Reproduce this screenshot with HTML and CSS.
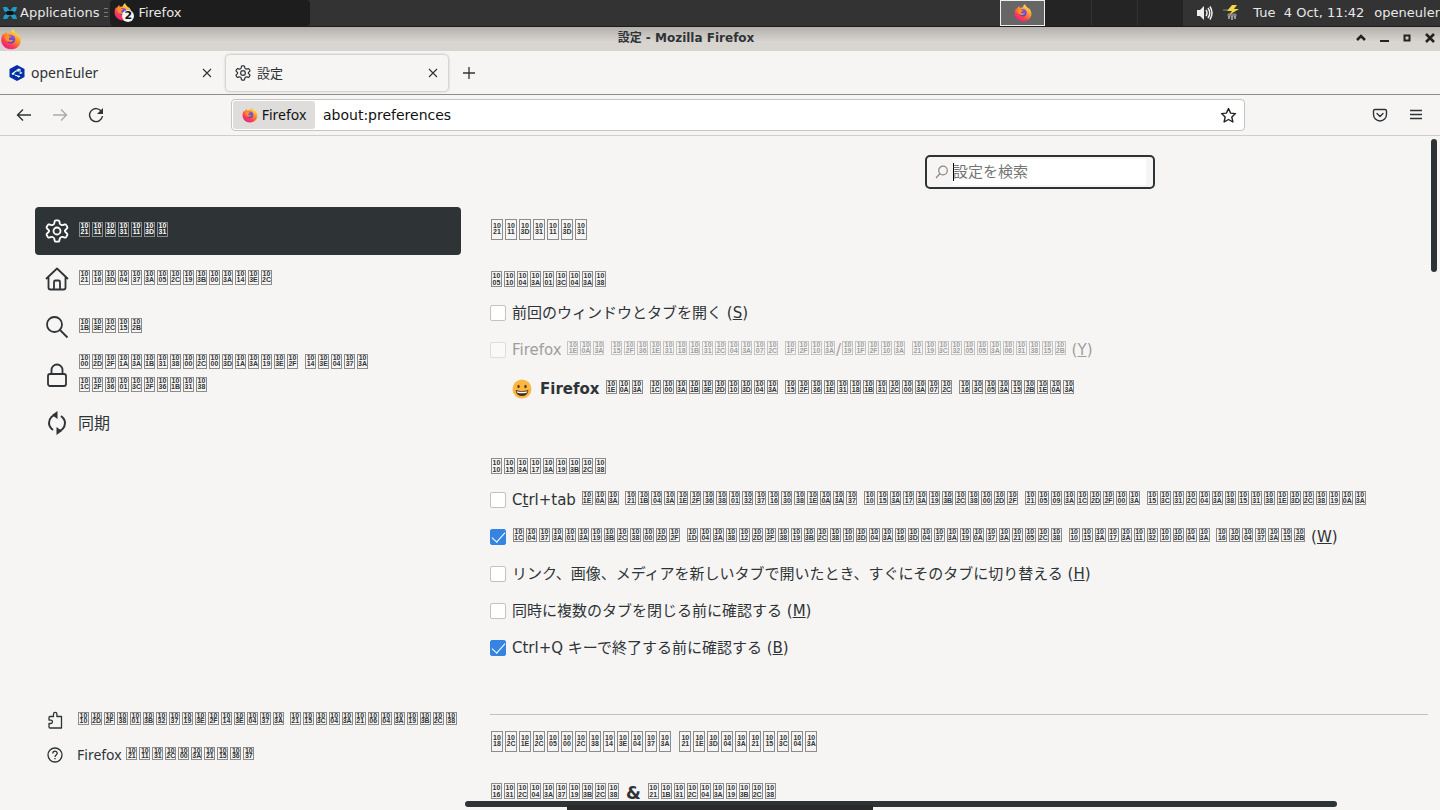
FILE: index.html
```html
<!DOCTYPE html>
<html lang="ja">
<head>
<meta charset="utf-8">
<title>設定</title>
<link rel="stylesheet" href="styles.css">
</head>
<body>
<svg class="defs" aria-hidden="true">
  <defs>
    <linearGradient id="flame" x1="0.85" y1="0.1" x2="0.25" y2="1"><stop offset="0" stop-color="#fff04f"/><stop offset="0.35" stop-color="#ff9a2a"/><stop offset="0.7" stop-color="#ff4050"/><stop offset="1" stop-color="#e81a8c"/></linearGradient>
    <linearGradient id="globe" x1="0.5" y1="0" x2="0.4" y2="1"><stop offset="0" stop-color="#a04be0"/><stop offset="1" stop-color="#4a4bd0"/></linearGradient>
    <symbol id="firefox" viewBox="0 0 32 32">
      <path fill="url(#flame)" d="M16 31C7.500 31 1 24.500 1 16.500c0-4 1.500-7.500 3-9.500l1 2.200C6 6.500 8 4.500 9.500 3.500c-.3 1.200 0 2.500 1 3.500 1.500-.8 3.500-1 5-.8C16 3.500 17.500 1.500 20 .5c0 3.500 3.500 5 5.500 8l.5-1.500c3 3 5 6.500 5 10C31 25 24.500 31 16 31z"/>
      <circle cx="16" cy="15.500" r="6.500" fill="url(#globe)"/>
      <path fill="#ff9125" d="M6 12c2-2.500 5-3 7.500-1.500 1 .5 3 .3 3 1.200s-2.500.8-3.500 2.300c-.8 1.500.5 3 2.500 3 1.500 0 2.500-.8 4-.8-1 2.800-3.500 3.800-6 3.300C9.500 19 6.500 16.500 6 12z"/>
    </symbol>
    <symbol id="gear" viewBox="0 0 24 24"><g fill="none" stroke="currentColor" stroke-width="1.800" stroke-linejoin="round"><path d="M10.800 1.300h2.400q.9 0 1.100.9l.5 2.300q.2.700.8 1l.8.500q.6.300 1.200.1l2.200-.7q.9-.3 1.300.5l1.200 2.100q.4.800-.2 1.400l-1.700 1.600q-.5.500-.5 1t.5 1l1.700 1.600q.6.600.2 1.400l-1.200 2.100q-.4.800-1.300.5l-2.200-.7q-.6-.2-1.200.1l-.8.500q-.6.300-.8 1l-.5 2.300q-.2.900-1.100.9h-2.400q-.9 0-1.100-.9l-.5-2.300q-.2-.7-.8-1l-.8-.5q-.6-.3-1.200-.1l-2.200.7q-.9.300-1.300-.5l-1.200-2.100q-.4-.8.2-1.400L3.600 13q.5-.5.500-1t-.5-1L1.900 9.400q-.6-.6-.2-1.400l1.200-2.100q.4-.8 1.300-.5l2.200.7q.6.200 1.200-.1l.8-.5q.6-.3.8-1l.5-2.300q.2-.9 1.100-.9z"/><circle cx="12" cy="12" r="3.500"/></g></symbol>
    <symbol id="close" viewBox="0 0 10 10"><path d="M1 1l8 8M9 1L1 9" fill="none" stroke="currentColor" stroke-width="1.100"/></symbol>
  </defs>
</svg>

<header class="panel">
  <button class="apps"><svg width="16" height="16" viewBox="0 0 16 16"><path d="M1 2l4 0 3 4 3-4h4l-1 4-4 2 4 2.500 1 3.500h-4L8 10l-3 4H1l1-3.500L6 8 2 6z" fill="#1b9fca"/><path d="M5 6h6l1 2-1 2H5L4 8z" fill="#111"/></svg>Applications</button>
  <span class="grip"></span>
  <button class="task"><span class="task-icon"><svg width="18" height="18"><use href="#firefox"/></svg><b class="count">2</b></span>Firefox</button>
  <div class="pager"><button class="desk current" aria-label="1"><svg width="18" height="18"><use href="#firefox"/></svg></button><button class="desk" aria-label="2"></button><button class="desk" aria-label="3"></button><button class="desk" aria-label="4"></button></div>
  <div class="tray">
    <svg width="16" height="16" viewBox="0 0 16 16"><path d="M0 5h3l4-4v14l-4-4H0z" fill="#eee"/><path d="M9 5q2 3 0 6M11 3q3.500 5 0 10M13 1.500q4 6.500 0 13" fill="none" stroke="#eee" stroke-width="1.500"/></svg>
    <svg width="16" height="16" viewBox="0 0 16 16"><path d="M0 5h6M5 9h8v2H5z" stroke="#888" fill="#777"/><path d="M9 0h5l-3 4h5L6 10l3-4H4z" fill="#f5d742"/><path d="M6 11v3M9 11v4M12 11v3" stroke="#bbb" stroke-width="1.500"/></svg>
    <span class="clock">Tue&nbsp; 4 Oct, 11:42</span><span>openeuler</span>
  </div>
</header>

<div class="titlebar">
  <svg width="22" height="21"><use href="#firefox"/></svg>
  <strong>設定 - Mozilla Firefox</strong>
  <div class="window-buttons">
    <button aria-label="shade"><svg width="10" height="10" viewBox="0 0 10 10"><path d="M1 7l4-4 4 4" fill="none" stroke="#222" stroke-width="2.500"/></svg></button>
    <button aria-label="minimize"><svg width="10" height="10" viewBox="0 0 10 10"><path d="M1 8h9" stroke="#222" stroke-width="2"/></svg></button>
    <button aria-label="maximize"><svg width="10" height="10" viewBox="0 0 10 10"><path d="M2.500 2.500h5v5h-5z" fill="none" stroke="#222" stroke-width="2"/></svg></button>
    <button aria-label="close"><svg width="10" height="10" viewBox="0 0 10 10"><path d="M1 1l8 8M9 1L1 9" stroke="#222" stroke-width="2.500"/></svg></button>
  </div>
</div>

<nav class="tabs">
  <div class="tab"><svg width="16" height="16" viewBox="0 0 16 16"><path d="M8 0l7.500 4v8L8 16 .5 12V4z" fill="#012fa6"/><path d="M3 9l4-3 5 0M6 10l4 1.500" stroke="#fff" stroke-width="1.200" fill="none"/><path d="M7 5l3-1.500 2 1-3 1.500zM2.500 9l2-1 1.500 1-2 1zM10 8l2-1 1.500 1-2 1zM8 11.500l2-1 1.500 1-2 1z" fill="#fff"/></svg><span>openEuler</span><button aria-label="close"><svg width="10" height="10"><use href="#close"/></svg></button></div>
  <div class="tab active"><svg width="16" height="16"><use href="#gear"/></svg><span>設定</span><button aria-label="close"><svg width="10" height="10"><use href="#close"/></svg></button></div>
  <button class="new-tab" aria-label="new tab"><svg width="12" height="12" viewBox="0 0 12 12"><path d="M6 0v12M0 6h12" stroke="currentColor" stroke-width="1.300"/></svg></button>
</nav>

<div class="toolbar">
  <div class="history">
    <button aria-label="back"><svg width="16" height="16" viewBox="0 0 16 16" fill="none" stroke="currentColor" stroke-width="1.400"><path d="M15 8H2M7 2.500L1.500 8 7 13.500"/></svg></button>
    <button aria-label="forward" disabled><svg width="16" height="16" viewBox="0 0 16 16" fill="none" stroke="currentColor" stroke-width="1.400"><path d="M1 8h13M9 2.500L14.500 8 9 13.500"/></svg></button>
    <button aria-label="reload"><svg width="16" height="16" viewBox="0 0 16 16"><path d="M13.500 4.500A6.500 6.500 0 1 0 14.500 9" fill="none" stroke="currentColor" stroke-width="1.400"/><path d="M15 1v6H9z" fill="currentColor"/></svg></button>
  </div>
  <div class="urlbar">
    <button class="identity"><svg width="16" height="16"><use href="#firefox"/></svg>Firefox</button>
    <input class="url" aria-label="URL" value="about:preferences">
    <button aria-label="bookmark"><svg width="17" height="17" viewBox="0 0 17 17"><path d="M8.500 1.500l2.100 4.600 4.900.5-3.700 3.400 1.100 5-4.400-2.500L4.100 15l1.100-5L1.500 6.600l4.900-.5z" fill="none" stroke="#222" stroke-width="1.400" stroke-linejoin="round"/></svg></button>
  </div>
  <div class="tools">
    <button aria-label="pocket"><svg width="16" height="16" viewBox="0 0 16 16" fill="none" stroke="currentColor" stroke-width="1.400" stroke-linecap="round" stroke-linejoin="round"><path d="M3 2.500h10q1.500 0 1.500 1.500v3.500a6.500 6.500 0 0 1-13 0V4q0-1.500 1.500-1.500zM5 6.500l3 3 3-3"/></svg></button>
    <button aria-label="menu"><svg width="14" height="14" viewBox="0 0 14 14"><path d="M1 2.500h12M1 6.500h12M1 10.500h12" stroke="currentColor" stroke-width="1.300"/></svg></button>
  </div>
</div>

<div class="page">
  <aside class="sidebar">
    <a class="category selected" href="#general"><svg width="24" height="24"><use href="#gear"/></svg><span data-my="21 11 3D 31 11 3D 31"></span></a>
    <a class="category" href="#home"><svg width="24" height="24" viewBox="0 0 24 24" fill="none" stroke="currentColor" stroke-width="1.800" stroke-linejoin="round" stroke-linecap="round"><path d="M1.500 11.500L12 1.500l10.500 10M3.500 10v10.500q0 2 2 2h13q2 0 2-2V10M9 22v-7q0-1.500 1.500-1.500h3Q15 13.500 15 15v7"/></svg><span data-my="21 16 3D 04 37 3A 05 2C 19 3B 00 3A 14 3E 2C"></span></a>
    <a class="category" href="#search"><svg width="24" height="24" viewBox="0 0 24 24" fill="none" stroke="currentColor" stroke-width="1.800"><circle cx="9.500" cy="9.500" r="7.500"/><path d="M15 15l7.500 7.500"/></svg><span data-my="1B 3E 2C 15 2B"></span></a>
    <a class="category privacy" href="#privacy"><svg width="24" height="24" viewBox="0 0 24 24" fill="none" stroke="currentColor" stroke-width="1.800"><rect x="3" y="11" width="18" height="12" rx="2"/><path d="M6.500 11V7a5.500 5.500 0 0 1 11 0v4"/></svg><span data-my="00 2D 2F 1A 3A 1B 31 38 00 2C 00 3D 1A 3A 19 3E 2F _ 14 3E 04 37 3A _ 1C 2F 36 01 3C 2F 36 1B 31 38"></span></a>
    <a class="category" href="#sync"><svg width="24" height="24" viewBox="0 0 24 24"><path d="M12 3.500c-4 0-8 3.500-8 8.500 0 3.500 2 5.500 4 7M12 20.500c4 0 8-3.500 8-8.500 0-3.500-2-5.500-4-7" fill="none" stroke="currentColor" stroke-width="2"/><path d="M12.500 0v8L7 4zM11.500 16v8l5.500-4z" fill="currentColor"/></svg><span>同期</span></a>
    <div class="footer-links">
      <a href="#addons"><svg width="16" height="18" viewBox="0 0 16 18" fill="none" stroke="currentColor" stroke-width="1.300" stroke-linejoin="round"><path d="M3 5.500h3.500V3a1.700 1.700 0 0 1 3.400 0v2.500h4.600V17H3q-1 0-1-1v-3.500h1.800a1.700 1.700 0 0 0 0-3.400H2V6.500q0-1 1-1z"/></svg><span data-my="10 2D 2F 38 01 3B 32 37 19 3E 2F 14 3E 04 37 3A _ 21 15 3C 04 3A 21 06 04 3A 19 3B 2C 38"></span></a>
      <a href="#help"><svg width="16" height="16" viewBox="0 0 16 16" fill="none" stroke="currentColor" stroke-width="1.300"><circle cx="8" cy="8" r="7"/><path d="M5.800 6.500C5.800 3.500 10.200 3.500 10.200 6.300 10.200 8 8 8 8 10M8 11v1.300"/></svg><span>Firefox <span data-my="21 11 31 2C 00 3A 21 15 36 37"></span></span></a>
    </div>
  </aside>

  <main class="content">
    <div class="search-row"><label class="search"><svg width="14" height="14" viewBox="0 0 14 14" fill="none" stroke="#888" stroke-width="1.200"><circle cx="8" cy="5.500" r="4.300"/><path d="M5 8.500L1 13"/></svg><input type="text" placeholder="設定を検索" aria-label="設定を検索"></label></div>
    <h1 data-my="21 11 3D 31 11 3D 31"></h1>
    <section class="startup">
      <h2 data-my="05 10 04 3A 01 3C 04 3A 38"></h2>
      <label class="option"><input type="checkbox"><span>前回のウィンドウとタブを開く (<u>S</u>)</span></label>
      <label class="option disabled"><input type="checkbox" disabled><span>Firefox <span data-my="1E 0A 3A _ 15 2F 36 1E 31 18 1B 31 2C 04 3A 07 2C _ 1F 2F 10 3A"></span>/<span data-my="19 1F 2F 10 3A _ 21 19 3C 32 05 05 3A 06 31 38 15 2B"></span> (<u>Y</u>)</span></label>
      <p class="status"><svg width="20" height="20" viewBox="0 0 20 20"><circle cx="10" cy="10" r="9.500" fill="#fcb743"/><ellipse cx="6.500" cy="7.500" rx="1.200" ry="1.800" fill="#5c3715"/><ellipse cx="13.500" cy="7.500" rx="1.200" ry="1.800" fill="#5c3715"/><path d="M3.500 11q6.500 2 13 0-1 6-6.500 6t-6.500-6z" fill="#4a2a18"/><path d="M4.500 12.200q5.500 1.300 11 0l-.8 1.500q-4.700 1-9.400 0z" fill="#fff"/></svg><span>Firefox <span data-my="1E 0A 3A _ 1C 00 3A 1B 3E 2D 10 3D 04 3A _ 15 2F 36 1E 31 18 1B 31 2C 00 3A 07 2C _ 16 3C 05 3A 15 2B 1E 0A 3A"></span></span></p>
    </section>
    <section class="tab-options">
      <h2 data-my="10 15 3A 17 3A 19 3B 2C 38"></h2>
      <label class="option"><input type="checkbox"><span>C<u>t</u>rl+tab <span data-my="1E 0A 3A _ 21 1B 04 3A 1E 2F 36 38 01 32 37 16 30 38 1E 0A 3A 37 _ 10 15 3A 17 3A 19 3B 2C 38 00 2D 2F _ 21 05 09 3A 1C 2D 2F 00 3A _ 15 3C 31 2C 04 3A 38 15 31 38 1E 3D 2C 38 19 0A 3A"></span></span></label>
      <label class="option"><input type="checkbox" checked><span><span data-my="1C 04 37 3A 01 3A 19 3B 2C 38 00 2D 2F _ 1D 04 3A 38 12 2D 2F 38 19 3B 2C 38 10 3D 04 3A 16 3D 04 37 3A 19 0A 37 3A 21 05 2C 38 _ 10 15 3A 17 3A 11 32 10 3D 04 3A _ 16 3D 04 37 3A 15 2B"></span> (<u>W</u>)</span></label>
      <label class="option"><input type="checkbox"><span>リンク、画像、メディアを新しいタブで開いたとき、すぐにそのタブに切り替える (<u>H</u>)</span></label>
      <label class="option"><input type="checkbox"><span>同時に複数のタブを閉じる前に確認する (<u>M</u>)</span></label>
      <label class="option"><input type="checkbox" checked><span>Ctrl+Q キーで終了する前に確認する (<u>B</u>)</span></label>
    </section>
    <hr>
    <h1 data-my="18 2C 1E 2C 05 00 2C 38 14 3E 04 37 3A _ 21 1E 3D 04 3A 21 15 3C 04 3A"></h1>
    <h2 class="fonts"><span data-my="16 31 2C 04 3A 37 19 3B 2C 38"></span> &amp; <span data-my="21 1B 31 2C 04 3A 19 3B 2C 38"></span></h2>
  </main>
  <div class="vbar"></div>
  <div class="hbar"><div class="hbar-low"></div></div>
</div>
<script src="script.js"></script>
</body>
</html>
```
FILE: styles.css
```css
* { box-sizing: border-box; }
html, body { height: 100%; }
body { margin: 0; display: flex; flex-direction: column; overflow: hidden; background: #f6f5f4; color: #2e3436; font: 15px/24px "DejaVu Sans", "Noto Sans CJK JP", sans-serif; }
button { border: 0; padding: 0; background: none; color: inherit; font: inherit; display: flex; align-items: center; justify-content: center; }
input { font: inherit; color: inherit; margin: 0; }
svg { display: block; flex: none; }
.defs { position: absolute; width: 0; height: 0; }

.panel { flex: none; display: flex; height: 27px; background: #333; border-bottom: 1px solid #1c1c1c; color: #e8e8e8; font-size: 13px; }
.apps { gap: 2px; padding-left: 2px; }
.grip { width: 4px; height: 10px; margin: 8px 2px 0 5px; background: repeating-linear-gradient(#777 0 1px, transparent 1px 4px); }
.task { justify-content: flex-start; width: 200px; gap: 6px; padding-left: 4px; background: #1d1d1d; border-radius: 4px; }
.task-icon { position: relative; padding-bottom: 2px; }
.count { position: absolute; left: 8px; top: 7px; width: 12px; height: 12px; border-radius: 6px; background: #f4f4f4; color: #111; font-size: 11px; line-height: 12px; text-align: center; }
.pager { display: flex; width: 184px; margin-left: auto; background: #242424; }
.desk { flex: 1; border-right: 1px solid #333; }
.desk.current { flex: none; width: 45px; height: 26px; background: #666; border: 1px solid #eee; }
.tray { display: flex; align-items: center; gap: 10px; margin-left: 13px; }
.clock { margin-left: 4px; }

.titlebar { flex: none; display: grid; grid-template-columns: 1fr auto 1fr; align-items: center; height: 24px; padding-right: 5px; background: linear-gradient(#b4b1ad, #d8d4d0 60%); font-size: 12px; line-height: 16px; }
.titlebar strong { padding-bottom: 2px; margin-right: 63px; }
.window-buttons { display: flex; justify-content: flex-end; gap: 13px; padding-bottom: 2px; }

.tabs { flex: none; display: flex; height: 44px; padding: 4px 3px 3px 0; border-bottom: 1px solid #8f8e8c; font: 14px/20px "Noto Sans", "Noto Sans CJK JP", sans-serif; }
.tab { display: flex; align-items: center; gap: 6px; width: 222px; margin-right: 4px; padding: 0 10px 0 9px; }
.tab span { flex: 1; }
.tab.active { margin-right: 3px; border-radius: 4px; box-shadow: 0 0 3px #999; font-size: 13px; }
.new-tab { width: 36px; }

.toolbar { flex: none; display: flex; align-items: center; height: 41px; border-bottom: 1px solid #d0cecb; }
.history { display: flex; gap: 20px; width: 231px; padding-left: 16px; }
.history button:disabled { color: #aaa; }
.urlbar { flex: 1; display: flex; height: 32px; padding: 1px 7px 1px 1px; border: 1px solid #c6c3c0; border-radius: 4px; background: #fff; color: #111; font-size: 14px; }
.identity { gap: 4px; width: 82px; border-radius: 3px; background: #dedddc; font-family: "Noto Sans", sans-serif; }
.url { flex: 1; border: 0; padding: 0 8px; outline: none; background: none; }
.tools { display: flex; align-items: center; justify-content: flex-end; gap: 21px; width: 195px; padding-right: 17px; }

.page { position: relative; flex: 1; min-height: 0; display: flex; overflow: hidden; }
.sidebar { display: flex; flex-direction: column; flex: none; width: 461px; padding: 71px 0 45px 35px; font-size: 16px; line-height: 23px; }
.category { display: flex; align-items: center; gap: 9px; min-height: 48px; padding: 0 80px 0 10px; border-radius: 4px; color: inherit; text-decoration: none; }
.category.selected { background: #2e3436; color: #fff; }
.footer-links { display: grid; gap: 15px; margin-top: auto; padding-left: 12px; font: 14px/20px "Noto Sans", sans-serif; }
.footer-links a { display: flex; align-items: center; gap: 14px; color: inherit; text-decoration: none; white-space: nowrap; }

.content { flex: 1; min-width: 0; padding: 19px 12px 0 29px; white-space: nowrap; }
.search-row { display: flex; justify-content: flex-end; padding-right: 273px; }
.search { display: flex; align-items: center; gap: 4px; width: 230px; height: 34px; padding: 0 7px 0 8px; border: 2px solid #2e3436; border-radius: 5px; }
.search input { flex: 1; min-width: 0; height: 26px; padding: 0; border: 0; outline: none; background: linear-gradient(#000, #000) 0 center / 1px 18px no-repeat #fff; }
.search input::placeholder { color: #757575; }
h1, h2 { margin: 0; font-size: 16px; line-height: 24px; }
h1 { margin-top: 30px; font-size: 18px; line-height: 24px; }
h2 { margin-top: 24px; }
.option { display: flex; align-items: center; gap: 6px; height: 24px; margin-top: 13px; }
.option input { appearance: none; flex: none; width: 16px; height: 16px; border: 1px solid #c4c2c0; border-radius: 2px; background: #fff; }
.option input:checked { border-color: #3584e4; background: #3584e4; }
.option input:checked::before { content: ""; display: block; width: 12px; height: 6px; margin: 2px 0 0 1px; border: solid #fff; border-width: 0 0 1px 1px; transform: rotate(-48deg); }
.disabled { opacity: 0.45; }
h2 + .option { margin-top: 7px; }
.status { display: flex; align-items: center; gap: 8px; height: 24px; margin: 15px 0 0 22px; font-weight: bold; }
.tab-options { margin-top: 56px; }
hr { height: 1px; margin: 54px 0 0; border: 0; background: #c4c2c0; }
hr + h1 { margin-top: 16px; }
.fonts { margin-top: 23px; font-size: 17px; }

.code { display: inline-block; overflow: hidden; width: 11px; height: 14px; margin: 0 1px; border: 1px solid #8c8c8c; font: bold 7px/6px "Liberation Sans", sans-serif; text-align: center; white-space: pre; }
.word { white-space: nowrap; }
.sidebar .code { height: 15px; }
.footer-links .code { height: 13px; line-height: 5px; }
h2 .code { height: 16px; line-height: 7px; }
h1 .code { width: 12px; height: 21px; padding-top: 3px; }

.vbar { position: absolute; right: 3px; top: 3px; width: 6px; height: 133px; border-radius: 3px; background: #2e3436; }
.hbar { position: absolute; left: 465px; right: 103px; bottom: 3px; height: 6px; border-radius: 3px; background: #2e3436; }
.hbar-low { position: absolute; left: 102px; top: 4px; width: 306px; height: 5px; background: #2a2a2a; }
```
FILE: script.js
```js
// Shows Myanmar characters (U+1000 block) as boxes holding their code points.
document.querySelectorAll('[data-my]').forEach(function (el) {
  el.dataset.my.split(' _ ').forEach(function (word, i) {
    if (i) el.append(' ');
    var group = document.createElement('span');
    group.className = 'word';
    word.split(' ').forEach(function (low) {
      var box = document.createElement('span');
      box.className = 'code';
      box.textContent = '10\n' + low;
      group.append(box);
    });
    el.append(group);
  });
});
```
